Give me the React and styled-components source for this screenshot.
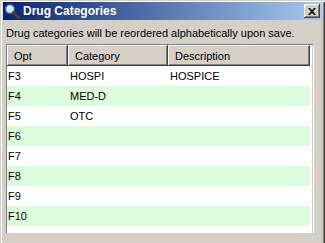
import React from "react";
import styled, { createGlobalStyle } from "styled-components";

const rows = [
  { opt: "F3", category: "HOSPI", description: "HOSPICE" },
  { opt: "F4", category: "MED-D", description: "" },
  { opt: "F5", category: "OTC", description: "" },
  { opt: "F6", category: "", description: "" },
  { opt: "F7", category: "", description: "" },
  { opt: "F8", category: "", description: "" },
  { opt: "F9", category: "", description: "" },
  { opt: "F10", category: "", description: "" },
];

const columns = [
  { key: "opt", label: "Opt", width: 61 },
  { key: "category", label: "Category", width: 100 },
  { key: "description", label: "Description", width: 142 },
];

function App() {
  return (
    <>
      <GlobalStyle />
      <Window>
        <TitleBar>
          <TitleIcon viewBox="0 0 16 16">
            <circle cx="6" cy="6" r="4.5" fill="#cfe6fb" stroke="#3c5f8a" strokeWidth="1.4" />
            <circle cx="4.8" cy="4.6" r="1.4" fill="#fff" />
            <path d="M9.3 9.3 L14.5 14.5" stroke="#5a3c22" strokeWidth="2.6" strokeLinecap="round" />
          </TitleIcon>
          <Title>Drug Categories</Title>
          <CloseButton>
            <svg width="8" height="7" viewBox="0 0 8 7">
              <path d="M0 0h2l2 2.2L6 0h2L5 3.5 8 7H6L4 4.8 2 7H0l3-3.5z" fill="#000" />
            </svg>
          </CloseButton>
        </TitleBar>
        <Message>Drug categories will be reordered alphabetically upon save.</Message>
        <Grid>
          <Inner>
            <HeaderRow>
              {columns.map((c) => (
                <HeaderCell key={c.key} $w={c.width}>
                  {c.label}
                </HeaderCell>
              ))}
            </HeaderRow>
            {rows.map((r, i) => (
              <Row key={r.opt} $alt={i % 2 === 1}>
                {columns.map((c) => (
                  <Cell key={c.key} $w={c.width} $first={c.key === "opt"}>
                    {r[c.key]}
                  </Cell>
                ))}
              </Row>
            ))}
          </Inner>
        </Grid>
      </Window>
    </>
  );
}

export default App;

const GlobalStyle = createGlobalStyle`
  html, body {
    margin: 0;
    padding: 0;
    background: #d4d0c8;
  }
  body {
    font-family: "Liberation Sans", Arial, sans-serif;
    font-size: 11px;
  }
`;

const Window = styled.div`
  width: 325px;
  height: 243px;
  box-sizing: border-box;
  padding: 2px 3px 0 3px;
  background: #d4d0c8;
  overflow: hidden;
  box-shadow: inset 1px 1px 0 #d4d0c8, inset 2px 2px 0 #ffffff,
    inset -1px 0 0 #404040, inset -2px 0 0 #808080;
`;

const TitleBar = styled.div`
  height: 18px;
  display: flex;
  align-items: center;
  padding: 0 2px 0 1px;
  background: linear-gradient(to right, #0a246a, #a6caf0);
`;

const TitleIcon = styled.svg`
  width: 16px;
  height: 16px;
  flex: none;
`;

const Title = styled.div`
  margin-left: 3px;
  flex: 1;
  color: #fff;
  font-family: "Liberation Sans", Arial, sans-serif;
  font-weight: bold;
  font-size: 12px;
  white-space: nowrap;
`;

const CloseButton = styled.div`
  width: 16px;
  height: 14px;
  box-sizing: border-box;
  display: flex;
  align-items: center;
  justify-content: center;
  background: #d4d0c8;
  box-shadow: inset -1px -1px 0 #404040, inset 1px 1px 0 #ffffff,
    inset -2px -2px 0 #808080;
`;

const Message = styled.div`
  margin-top: 6px;
  padding-left: 3px;
  height: 14px;
  line-height: 14px;
  color: #000;
  white-space: nowrap;
`;

const Grid = styled.div`
  margin: 4px 0 0 3px;
  width: 306px;
  border-top: 1px solid #808080;
  border-left: 1px solid #808080;
  border-right: 1px solid #ffffff;
`;

const Inner = styled.div`
  width: 305px;
  height: 188px;
  background: #fff;
  overflow: hidden;
`;

const HeaderRow = styled.div`
  display: flex;
  height: 21px;
`;

const HeaderCell = styled.div`
  width: ${(p) => p.$w}px;
  box-sizing: border-box;
  padding-left: 7px;
  display: flex;
  align-items: center;
  background: #d4d0c8;
  color: #000;
  box-shadow: inset -1px -1px 0 #404040, inset 1px 1px 0 #ffffff,
    inset -2px -2px 0 #808080;
`;

const Row = styled.div`
  display: flex;
  height: 20px;
  width: 303px;
  background: ${(p) => (p.$alt ? "#dcfcdc" : "#ffffff")};
`;

const Cell = styled.div`
  width: ${(p) => p.$w}px;
  box-sizing: border-box;
  padding-left: ${(p) => (p.$first ? 1 : 2)}px;
  display: flex;
  align-items: center;
  color: #000;
  white-space: nowrap;
`;
